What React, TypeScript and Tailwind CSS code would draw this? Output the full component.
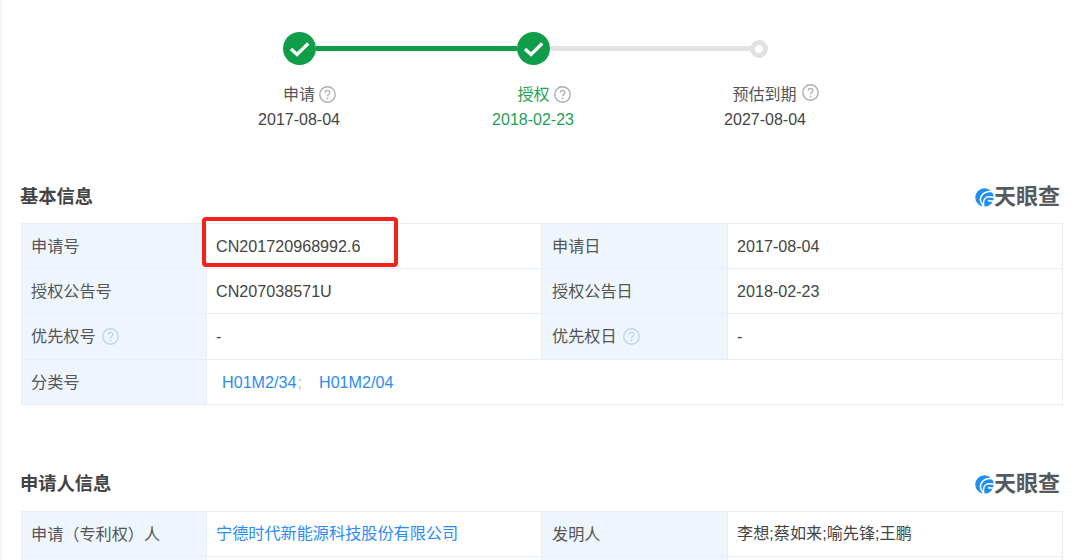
const FONT = "font-['Liberation_Sans','Noto_Sans_CJK_SC',sans-serif]";

function Help({ color = '#aeaeae', size = 17 }: { color?: string; size?: number }) {
  return (
    <svg width={size} height={size} viewBox="0 0 17 17" className="shrink-0" fill="none">
      <circle cx="8.5" cy="8.5" r="7.7" stroke={color} strokeWidth="1.4" />
      <path d="M6.2 6.7c0-1.4 1-2.300 2.300-2.300s2.300.9 2.300 2.100c0 2-2.300 1.800-2.300 3.700" stroke={color} strokeWidth="1.300" />
      <circle cx="8.500" cy="12.400" r=".9" fill={color} />
    </svg>
  );
}

function Check() {
  return (
    <div className="w-[33px] h-[33px] rounded-full bg-[#0f9d4a] flex items-center justify-center shrink-0">
      <svg width="21" height="16" viewBox="0 0 21 16" fill="none">
        <path d="M2 8l6 5.500L19.200 2.500" stroke="#fff" strokeWidth="3.200" />
      </svg>
    </div>
  );
}

function Logo() {
  return (
    <div className="flex items-center">
      <svg width="19" height="19" viewBox="0 0 19 19">
        <circle cx="9.500" cy="9.500" r="9.300" fill="#1f8ef1" />
        <path d="M19 4.200C13 2.200 6.500 5 5.500 10.500 5 13.500 6.500 16.500 9 18.800 8 15 8 12 10.500 10c2-1.600 5-1.500 8.500-.5" fill="none" stroke="#fff" strokeWidth="1.500" />
        <path d="M13 12.500c1.800.7 3.500.7 6 .2" fill="none" stroke="#fff" strokeWidth="1.500" />
      </svg>
      <span className="text-[22px] leading-none font-bold text-[#555a60] w-[66px]">天眼查</span>
    </div>
  );
}

function Label({ children, className = 'pl-[9px]' }: { children: React.ReactNode; className?: string }) {
  return <div className={`flex items-center gap-[6px] bg-[#eef5fc] border-r border-b border-[#e6eef6] text-[#555] ${className}`}>{children}</div>;
}

function Value({ children, className = 'text-[#444]' }: { children: React.ReactNode; className?: string }) {
  return <div className={`flex items-center pl-[9px] border-r border-b border-[#e6eef6] ${className}`}>{children}</div>;
}

const tableCols = 'grid grid-cols-[185px_335px_186px_335px] w-[1042px] border-t border-l border-[#e6eef6] text-[16.15px]';
const label2 = 'pl-[10px]';

export default function App() {
  return (
    <div className={`${FONT} w-[1080px] h-[560px] overflow-hidden bg-white border-l-2 border-[#f5f5f5]`}>
      <div className="flex items-center pt-[32px] pl-[281px]">
        <Check />
        <div className="w-[201px] h-[5px] bg-[#0f9d4a]" />
        <Check />
        <div className="w-[201px] h-[5px] bg-[#e2e2e2]" />
        <div className="w-[18px] h-[18px] rounded-full border-[5px] border-[#e2e2e2] bg-white -ml-px" />
      </div>

      <div className="flex pl-[180px] pt-[17px] text-[16px] leading-[25px]">
        <div className="w-[234px] text-center text-[#555]">
          <div className="flex items-center justify-center gap-[4px] pl-[21px]">申请<Help /></div>
          <div className="text-[#444]">2017-08-04</div>
        </div>
        <div className="w-[234px] text-center text-[#1ea052]">
          <div className="flex items-center justify-center gap-[4px] pl-[22px]">授权<Help /></div>
          <div>2018-02-23</div>
        </div>
        <div className="w-[230px] text-center text-[#555]">
          <div className="flex items-center justify-center gap-[5px] pl-[21px]">预估到期<span className="-mt-[5px]"><Help /></span></div>
          <div className="text-[#444]">2027-08-04</div>
        </div>
      </div>

      <div className="pl-[19px]">
        <div className="flex items-center justify-between w-[1039px] h-[26px] mt-[52px] mb-[13px]">
          <h2 className="text-[18.300px] font-bold text-[#444] -ml-px">基本信息</h2>
          <Logo />
        </div>
        <div className="relative">
          <div className={`${tableCols} grid-rows-[45px_45px_46px_45px]`}>
            <Label>申请号</Label>
            <Value>CN201720968992.6</Value>
            <Label className={label2}>申请日</Label>
            <Value>2017-08-04</Value>
            <Label>授权公告号</Label>
            <Value>CN207038571U</Value>
            <Label className={label2}>授权公告日</Label>
            <Value>2018-02-23</Value>
            <Label>优先权号<Help color="#bcd6ef" /></Label>
            <Value>-</Value>
            <Label className={label2}>优先权日<Help color="#bcd6ef" /></Label>
            <Value>-</Value>
            <Label>分类号</Label>
            <div className="col-span-3 flex items-center pl-[15px] border-r border-b border-[#e6eef6] text-[#2b8cf7]">
              H01M2/34<span className="text-[#bbb] ml-[1px] mr-[17px]">;</span>H01M2/04
            </div>
          </div>
          <div className="absolute left-[181px] -top-[6px] w-[196px] h-[50px] border-[4px] border-[#f5221b] rounded-[4px]" />
        </div>

        <div className="flex items-center justify-between w-[1039px] h-[26px] mt-[66px] mb-[14px]">
          <h2 className="text-[18.300px] font-bold text-[#444] -ml-px">申请人信息</h2>
          <Logo />
        </div>
        <div className={`${tableCols} auto-rows-[45px]`}>
          <Label>申请（专利权）人</Label>
          <Value className="text-[#2b8cf7] pb-[2px]">宁德时代新能源科技股份有限公司</Value>
          <Label className={label2}>发明人</Label>
          <Value className="text-[#444] pb-[2px]">李想;蔡如来;喻先锋;王鹏</Value>
          <Label>&nbsp;</Label>
          <Value>&nbsp;</Value>
          <Label className={label2}>&nbsp;</Label>
          <Value>&nbsp;</Value>
        </div>
      </div>
    </div>
  );
}
